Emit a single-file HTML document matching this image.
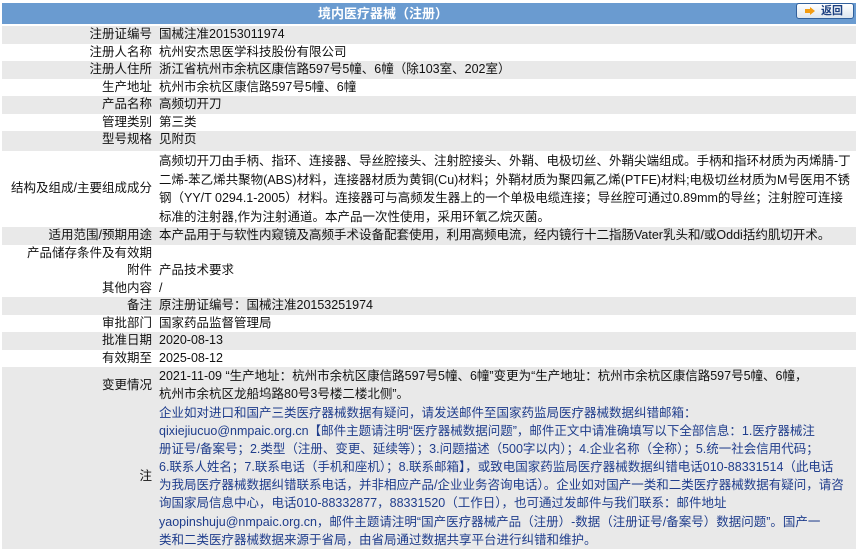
<!DOCTYPE html>
<html><head><meta charset="utf-8"><style>
*{margin:0;padding:0;box-sizing:border-box}
body{width:856px;height:550px;background:#fff;position:relative;overflow:hidden;font-family:"Liberation Sans","Noto Sans CJK SC",sans-serif;font-size:12.5px;color:#111}
.hd{position:absolute;left:2px;top:3px;width:854px;height:21px;background:#6a9bd0;color:#fff;font-weight:bold;font-size:13px;text-align:center;line-height:21px;padding-right:92px}
.btn{position:absolute;right:2px;top:3px;width:58px;height:16px;border:1px solid #31609c;border-radius:3px;background:linear-gradient(#fff,#dde6ef);color:#1b3f80;font-size:11px;font-weight:bold;line-height:14px;text-align:right;padding-right:10px}
.btn i{position:absolute;left:8px;top:3px;width:10px;height:8px;background:#f39c12;clip-path:polygon(0 25%,50% 25%,50% 0,100% 50%,50% 100%,50% 75%,0 75%)}
.r{position:absolute;left:2px;width:854px;line-height:17.5px}
.g{background:#e9e9e9}
.l{position:absolute;left:0;width:150px;text-align:right;top:0}
.v{position:absolute;left:157px;right:2px;top:0;white-space:nowrap}
.n{color:#1f3d8c}
</style></head><body>
<div class="hd">境内医疗器械（注册）</div>
<div class="btn"><i></i>返回</div>

<div class="r g" style="top:26px;height:17.5px"><div class="l">注册证编号</div><div class="v">国械注准20153011974</div></div>
<div class="r" style="top:43.5px;height:17.5px"><div class="l">注册人名称</div><div class="v">杭州安杰思医学科技股份有限公司</div></div>
<div class="r g" style="top:61px;height:17.5px"><div class="l">注册人住所</div><div class="v">浙江省杭州市余杭区康信路597号5幢、6幢（除103室、202室）</div></div>
<div class="r" style="top:78.5px;height:17.5px"><div class="l">生产地址</div><div class="v">杭州市余杭区康信路597号5幢、6幢</div></div>
<div class="r g" style="top:96px;height:17.5px"><div class="l">产品名称</div><div class="v">高频切开刀</div></div>
<div class="r" style="top:113.5px;height:17.5px"><div class="l">管理类别</div><div class="v">第三类</div></div>
<div class="r g" style="top:131px;height:20px"><div class="l">型号规格</div><div class="v">见附页</div></div>
<div class="r" style="top:151px;height:76px;line-height:18.5px"><div class="l" style="top:28px">结构及组成/主要组成成分</div><div class="v" style="top:1px">高频切开刀由手柄、指环、连接器、导丝腔接头、注射腔接头、外鞘、电极切丝、外鞘尖端组成。手柄和指环材质为丙烯腈-丁<br>二烯-苯乙烯共聚物(ABS)材料，连接器材质为黄铜(Cu)材料；外鞘材质为聚四氟乙烯(PTFE)材料;电极切丝材质为M号医用不锈<br>钢（YY/T 0294.1-2005）材料。连接器可与高频发生器上的一个单极电缆连接；导丝腔可通过0.89mm的导丝；注射腔可连接<br>标准的注射器,作为注射通道。本产品一次性使用，采用环氧乙烷灭菌。</div></div>
<div class="r g" style="top:227px;height:17.5px"><div class="l">适用范围/预期用途</div><div class="v">本产品用于与软性内窥镜及高频手术设备配套使用，利用高频电流，经内镜行十二指肠Vater乳头和/或Oddi括约肌切开术。</div></div>
<div class="r" style="top:244.5px;height:17.5px"><div class="l">产品储存条件及有效期</div><div class="v"></div></div>
<div class="r" style="top:262px;height:17.5px"><div class="l">附件</div><div class="v">产品技术要求</div></div>
<div class="r" style="top:279.5px;height:17.5px"><div class="l">其他内容</div><div class="v">/</div></div>
<div class="r g" style="top:297px;height:17.5px"><div class="l">备注</div><div class="v">原注册证编号：国械注准20153251974</div></div>
<div class="r" style="top:314.5px;height:17.5px"><div class="l">审批部门</div><div class="v">国家药品监督管理局</div></div>
<div class="r g" style="top:332px;height:17.5px"><div class="l">批准日期</div><div class="v">2020-08-13</div></div>
<div class="r" style="top:349.5px;height:17.5px"><div class="l">有效期至</div><div class="v">2025-08-12</div></div>
<div class="r g" style="top:367px;height:36px;line-height:18px"><div class="l" style="top:9px">变更情况</div><div class="v" style="top:0">2021-11-09 “生产地址：杭州市余杭区康信路597号5幢、6幢”变更为“生产地址：杭州市余杭区康信路597号5幢、6幢，<br>杭州市余杭区龙船坞路80号3号楼二楼北侧”。</div></div>
<div class="r g n" style="top:403px;height:146px;line-height:18.1px"><div class="l" style="top:64px;color:#111">注</div><div class="v" style="top:1px">企业如对进口和国产三类医疗器械数据有疑问，请发送邮件至国家药监局医疗器械数据纠错邮箱：<br>qixiejiucuo@nmpaic.org.cn【邮件主题请注明“医疗器械数据问题”，邮件正文中请准确填写以下全部信息：1.医疗器械注<br>册证号/备案号；2.类型（注册、变更、延续等）；3.问题描述（500字以内）；4.企业名称（全称）；5.统一社会信用代码；<br>6.联系人姓名；7.联系电话（手机和座机）；8.联系邮箱】，或致电国家药监局医疗器械数据纠错电话010-88331514（此电话<br>为我局医疗器械数据纠错联系电话，并非相应产品/企业业务咨询电话）。企业如对国产一类和二类医疗器械数据有疑问，请咨<br>询国家局信息中心，电话010-88332877，88331520（工作日），也可通过发邮件与我们联系：邮件地址<br>yaopinshuju@nmpaic.org.cn，邮件主题请注明“国产医疗器械产品（注册）-数据（注册证号/备案号）数据问题”。国产一<br>类和二类医疗器械数据来源于省局，由省局通过数据共享平台进行纠错和维护。</div></div>
</body></html>
